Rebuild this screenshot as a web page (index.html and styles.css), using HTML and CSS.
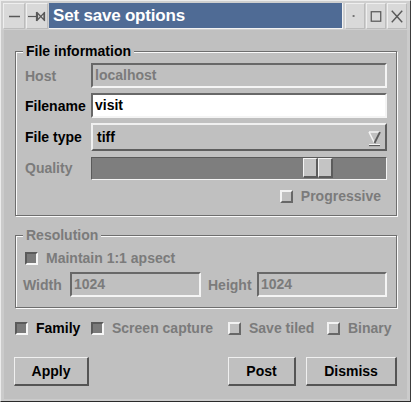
FILE: index.html
```html
<!DOCTYPE html>
<html>
<head>
<meta charset="utf-8">
<link rel="stylesheet" href="styles.css">
</head>
<body>
<div class="window">
  <div class="titlebar">
    <div class="tbtn">
      <svg width="20" height="24" viewBox="0 0 20 24"><line x1="5" y1="12.5" x2="16" y2="12.5" stroke="#585858" stroke-width="1.5"/></svg>
    </div>
    <div class="tbtn">
      <svg width="20" height="24" viewBox="0 0 20 24" fill="none" stroke="#585858" stroke-width="1.2">
        <line x1="1" y1="12.5" x2="9" y2="12.5"/>
        <line x1="9.5" y1="8" x2="9.5" y2="17"/>
        <polygon points="10.5,9 17,16 17,9 10.5,16"/>
        <line x1="17.5" y1="8" x2="17.5" y2="17"/>
      </svg>
    </div>
    <div class="title">Set save options</div>
    <div class="tbtn rb">
      <svg width="19" height="24" viewBox="0 0 19 24"><rect x="7" y="11" width="2" height="2" fill="#707070"/></svg>
    </div>
    <div class="tbtn rb">
      <svg width="19" height="24" viewBox="0 0 19 24"><rect x="4.5" y="7.5" width="10" height="10" fill="none" stroke="#585858" stroke-width="1.3"/></svg>
    </div>
    <div class="tbtn rb">
      <svg width="19" height="24" viewBox="0 0 19 24" stroke="#585858" stroke-width="1.5"><line x1="4" y1="6.5" x2="15" y2="18.5"/><line x1="15" y1="6.5" x2="4" y2="18.5"/></svg>
    </div>
  </div>

  <div class="content">
    <fieldset class="group g1">
      <legend>File information</legend>
      <div class="form">
        <span class="lbl dis">Host</span>
        <div class="field dis">localhost</div>
        <span class="lbl">Filename</span>
        <div class="field white">visit</div>
        <span class="lbl">File type</span>
        <div class="combo">
          <span>tiff</span>
          <svg class="arrow" width="13" height="18" viewBox="0 0 13 18">
            <polyline points="1,2 12,2" stroke="#f4f4f4" stroke-width="1.5" fill="none"/>
            <polyline points="1,2 6.5,13" stroke="#f4f4f4" stroke-width="1.5" fill="none"/>
            <polyline points="12,2 6.5,13" stroke="#5c5c5c" stroke-width="1.8" fill="none"/>
            <line x1="1" y1="15.5" x2="12" y2="15.5" stroke="#5c5c5c" stroke-width="1.3"/>
            <line x1="1" y1="14.5" x2="12" y2="14.5" stroke="#f4f4f4" stroke-width="1"/>
          </svg>
        </div>
        <span class="lbl dis">Quality</span>
        <div class="slider">
          <div class="thumb" style="margin-left:211px"><span></span><span></span></div>
        </div>
      </div>
      <div class="progrow">
        <span class="check"></span><span class="dis">Progressive</span>
      </div>
    </fieldset>

    <fieldset class="group g2">
      <legend class="dis">Resolution</legend>
      <div class="maintain">
        <span class="check on"></span><span class="dis">Maintain 1:1 apsect</span>
      </div>
      <div class="sizerow">
        <span class="dis wlbl">Width</span>
        <div class="field dis wfield">1024</div>
        <span class="dis hlbl">Height</span>
        <div class="field dis hfield">1024</div>
      </div>
    </fieldset>

    <div class="checks">
      <div class="citem c1"><span class="check on"></span><span>Family</span></div>
      <div class="citem c2"><span class="check on"></span><span class="dis">Screen capture</span></div>
      <div class="citem c3"><span class="check"></span><span class="dis">Save tiled</span></div>
      <div class="citem c4"><span class="check"></span><span class="dis">Binary</span></div>
    </div>

    <div class="buttons">
      <button class="btn apply">Apply</button>
      <div class="spacer"></div>
      <button class="btn post">Post</button>
      <button class="btn dismiss">Dismiss</button>
    </div>
  </div>
</div>
</body>
</html>
```
FILE: styles.css
```css
* { box-sizing: border-box; }

body {
  margin: 0;
  background: #c0c0c0;
  font: bold 14px "Liberation Sans", Arial, sans-serif;
  color: #000;
}

.window {
  width: 411px;
  height: 402px;
  display: flex;
  flex-direction: column;
  background: #cbcbcb;
  border-top: 1px solid #ececec;
  border-left: 1px solid #ececec;
  border-right: 1px solid #3c3c3c;
  border-bottom: 1px solid #2a2a2a;
}

.titlebar {
  display: flex;
  height: 29px;
  padding: 2px 3px 0 2px;
  background: #cfcfcf;
}

.tbtn {
  width: 22px;
  height: 26px;
  margin-right: 1px;
  background: #d9d9d9;
  border-top: 1px solid #efefef;
  border-left: 1px solid #efefef;
  border-right: 1px solid #bcbcbc;
  border-bottom: 1px solid #bcbcbc;
  display: flex;
  align-items: center;
  justify-content: center;
}

.tbtn.rb {
  width: 20px;
  margin-right: 0;
  margin-left: 1px;
}

.title {
  flex: 1;
  height: 26px;
  margin-right: 1px;
  background: #4f6b95;
  border-right: 1px solid #f2f2f2;
  border-bottom: 1px solid #f2f2f2;
  color: #fff;
  font-size: 17px;
  line-height: 25px;
  padding-left: 4px;
  letter-spacing: -0.2px;
  white-space: nowrap;
  overflow: hidden;
}

.content {
  flex: 1;
  margin: 0 3px 2px 3px;
  background: #c0c0c0;
  padding: 13px 10px 0 11px;
  display: flex;
  flex-direction: column;
}

.dis { color: #7b7b7b; }

.group {
  margin: 0;
  border: 1px solid #6e6e6e;
  box-shadow: inset 1px 1px 0 #fafafa, 1px 1px 0 #fafafa;
  min-width: 0;
}

.group legend {
  padding: 0 3px;
  margin-left: -2px;
  line-height: 16px;
  background: #c0c0c0;
}

.g1 { padding: 4px 9px 11px 9px; }
.g2 { margin-top: 11px; padding: 7px 9px 10px 9px; }

.form {
  display: grid;
  grid-template-columns: 66px 1fr;
  grid-template-rows: 25px 25px 28px 23px;
  row-gap: 5px;
  align-items: center;
}
.form .slider { margin-top: 1px; }

.lbl { white-space: nowrap; }

.field {
  height: 25px;
  border-style: solid;
  border-width: 2px;
  border-color: #686868 #f4f4f4 #f4f4f4 #686868;
  padding: 0 2px;
  line-height: 21px;
  background: #c0c0c0;
  font-weight: bold;
}
.field.white { background: #fff; color: #000; }

.combo {
  height: 28px;
  border-style: solid;
  border-width: 2px;
  border-color: #f0f0f0 #5e5e5e #5e5e5e #f0f0f0;
  background: #c0c0c0;
  display: flex;
  align-items: center;
  padding: 0 4px 0 4px;
}
.combo span { flex: 1; }
.combo .arrow { margin-top: 3px; }

.slider {
  height: 23px;
  background: #7e7e7e;
  border-style: solid;
  border-width: 1px;
  border-color: #5a5a5a #f4f4f4 #f4f4f4 #5a5a5a;
  display: flex;
}

.thumb {
  display: flex;
  height: 20px;
  margin-top: 0;
}
.thumb span {
  width: 15px;
  height: 20px;
  background: #c4c4c4;
  border-style: solid;
  border-width: 1px 2px 2px 1px;
  border-color: #f4f4f4 #5c5c5c #5c5c5c #f4f4f4;
}

.check {
  width: 13px;
  height: 13px;
  flex: none;
  border-style: solid;
  border-width: 2px;
  border-color: #f2f2f2 #686868 #686868 #f2f2f2;
  background: #c0c0c0;
  margin-right: 8px;
}
.check.on {
  background: #7a7a7a;
  border-color: #5a5a5a #f6f6f6 #f6f6f6 #5a5a5a;
}

.progrow {
  display: flex;
  justify-content: flex-end;
  align-items: center;
  height: 16px;
  margin-top: 9px;
  margin-right: 6px;
}

.maintain {
  display: flex;
  align-items: center;
  height: 16px;
}

.sizerow {
  display: flex;
  align-items: center;
  margin-top: 6px;
  margin-left: -2px;
}
.wlbl { width: 47px; }
.wfield { width: 131px; }
.hlbl { width: 56px; padding-left: 7px; }
.hfield { flex: 1; }

.checks {
  display: flex;
  align-items: center;
  height: 16px;
  margin-top: 12px;
}
.citem { display: flex; align-items: center; white-space: nowrap; }
.c1 { width: 76px; }
.c2 { width: 137px; }
.c3 { width: 99px; }
.c4 { flex: 1; }

.buttons {
  display: flex;
  margin-top: 21px;
  margin-left: -1px;
}
.spacer { flex: 1; }

.btn {
  height: 29px;
  font: bold 14px "Liberation Sans", Arial, sans-serif;
  color: #000;
  background: #c0c0c0;
  border-style: solid;
  border-width: 1px 2px 2px 1px;
  border-color: #f0f0f0 #555 #555 #f0f0f0;
  padding: 0;
}
.apply { width: 75px; }
.post { width: 68px; margin-right: 10px; }
.dismiss { width: 91px; }
```
